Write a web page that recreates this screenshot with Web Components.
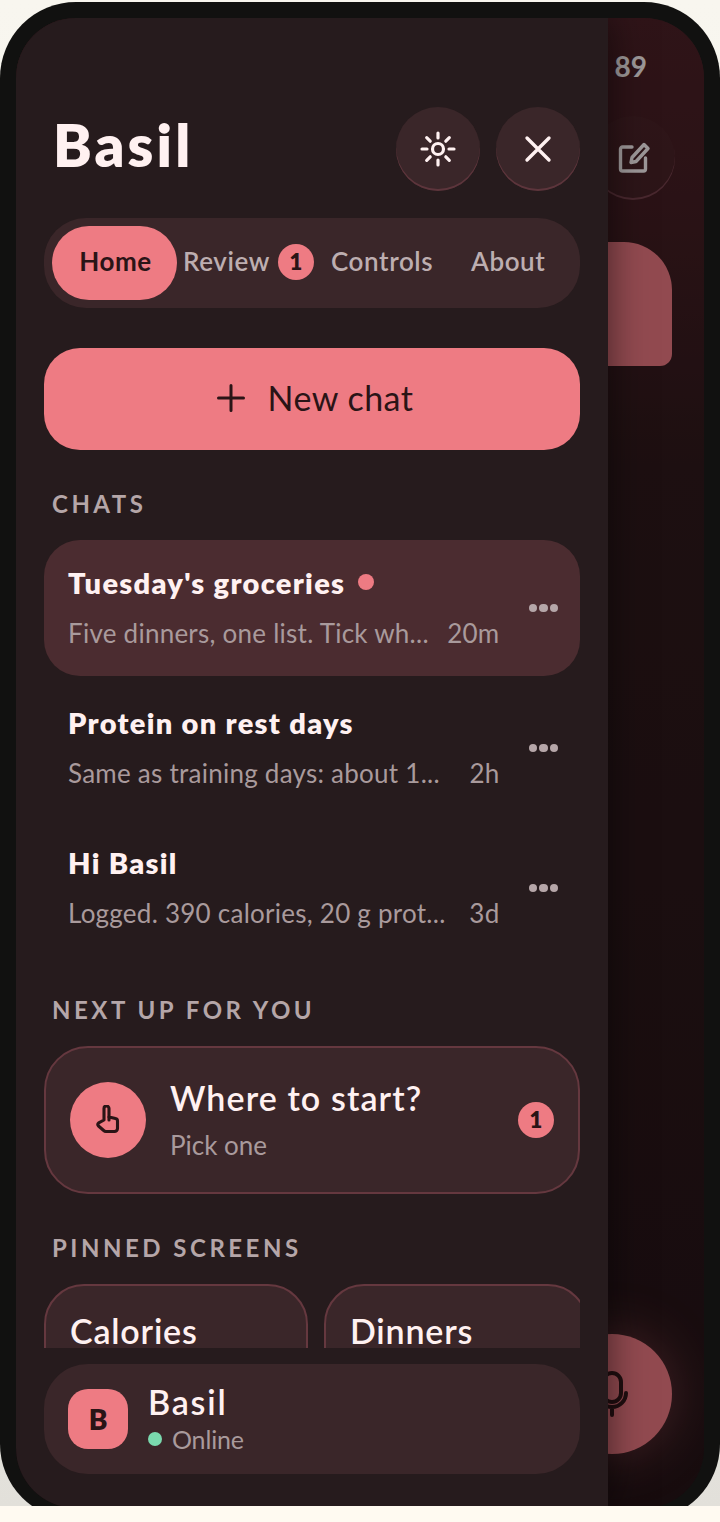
<!DOCTYPE html>
<html>
<head>
  <meta charset="utf-8">
  <style>
    html, body { margin: 0; background: #fffaf1; }
    body { height: 1522px; overflow: hidden; font-family: "Lato", "Noto Sans", sans-serif; }
  </style>
</head>
<body>
  <phone-frame>
    <chat-behind></chat-behind>
    <side-drawer>
      <drawer-header></drawer-header>
      <tab-bar></tab-bar>
      <new-chat></new-chat>
      <section-label>CHATS</section-label>
      <chat-list>
        <chat-row title="Tuesday's groceries" sub="Five dinners, one list. Tick wh..." time="20m" active unread></chat-row>
        <chat-row title="Protein on rest days" sub="Same as training days: about 1..." time="2h"></chat-row>
        <chat-row title="Hi Basil" sub="Logged. 390 calories, 20 g prot..." time="3d"></chat-row>
      </chat-list>
      <section-label>NEXT UP FOR YOU</section-label>
      <next-card></next-card>
      <section-label>PINNED SCREENS</section-label>
      <pinned-row>
        <pinned-card>Calories</pinned-card>
        <pinned-card>Dinners</pinned-card>
      </pinned-row>
      <profile-bar slot="footer"></profile-bar>
    </side-drawer>
  </phone-frame>

  <script>
    const pink = '#ee7b83';
    const panel = '#3a2629';
    const muted = '#a99a9c';
    const ink = '#2a1416';

    function define(name, html, setup) {
      customElements.define(name, class extends HTMLElement {
        constructor() {
          super();
          this.attachShadow({ mode: 'open' });
        }
        connectedCallback() {
          this.shadowRoot.innerHTML = typeof html === 'function' ? html(this) : html;
          if (setup) setup(this);
        }
      });
    }

    // device body, clipped just above the bottom strip of the page
    define('phone-frame', `
      <style>
        :host { display: block; height: 1506px; overflow: hidden;
          background: linear-gradient(#f8f6ef, #f2f0e9 60%, #e2e0da); }
        .body { box-sizing: border-box; height: 1518px; padding: 16px 16px 12px;
          background: #111110; border-radius: 76px; }
        .screen { position: relative; height: 100%; border-radius: 60px; overflow: hidden; }
      </style>
      <div style="height:2px"></div>
      <div class="body"><div class="screen"><slot></slot></div></div>
    `);

    // conversation view under the open drawer
    define('chat-behind', `
      <style>
        :host { display: block; position: absolute; inset: 0; box-sizing: border-box; padding: 34px 29px 0 0;
          background: linear-gradient(#441e23, #3c1b1f 12%, #251617 30%, #1b1012 100%); color: #fff; }
        .top { display: flex; flex-direction: column; align-items: flex-end; }
        .num { font-size: 28px; font-weight: 700; line-height: 28px; margin-right: 28px; color: #fff; }
        .edit { width: 84px; height: 84px; border-radius: 50%; display: grid; place-items: center; margin-top: 36px;
          box-shadow: inset 0 -2px 0 #70404a; background: rgba(255,255,255,.02); }
        .bubble { margin: 42px 3px 0 auto; width: 300px; height: 124px; background: ${pink};
          border-radius: 48px 48px 12px 48px; }
        .mic { position: absolute; right: 32px; bottom: 54px; width: 120px; height: 120px; border-radius: 50%;
          background: ${pink}; box-shadow: 0 0 50px rgba(238,123,131,.35); display: grid; place-items: center; }
        .scrim { position: absolute; inset: 0; background: rgba(18,8,9,.42); }
      </style>
      <div class="top">
        <div class="num">89</div>
        <div class="edit">
          <svg width="34" height="34" viewBox="0 0 34 34" fill="none" stroke="#fff" stroke-width="3.4" stroke-linecap="round" stroke-linejoin="round" style="margin:0 0 0 2px">
            <path d="M15 6H5.500a2 2 0 0 0-2 2v20a2 2 0 0 0 2 2h21a2 2 0 0 0 2-2V17"/>
            <path d="M14 21.500l1-5L27 3.500l4 4L19 20.500z"/>
          </svg>
        </div>
      </div>
      <div class="bubble"></div>
      <div class="mic">
        <svg width="32" height="46" viewBox="0 0 32 46" fill="none" stroke="${ink}" stroke-width="4" stroke-linecap="round">
          <rect x="7" y="2" width="18" height="29" rx="9"/>
          <path d="M2 22a14 14 0 0 0 28 0M16 36v8"/>
        </svg>
      </div>
      <div class="scrim"></div>
    `);

    define('side-drawer', `
      <style>
        :host { display: flex; flex-direction: column; position: absolute; left: 0; top: 0; bottom: 0; width: 592px;
          background: #261b1d; box-shadow: 0 0 36px rgba(0,0,0,.55); }
        .scroll { height: 1330px; margin: 0 28px; overflow: hidden; flex: none; }
        .foot { padding: 16px 28px 0; flex: 1; }
      </style>
      <div class="scroll"><slot></slot></div>
      <div class="foot"><slot name="footer"></slot></div>
    `);

    define('drawer-header', `
      <style>
        :host { display: flex; align-items: center; gap: 16px; padding-top: 89px; height: 84px; }
        h1 { flex: 1; margin: 0 0 9px 9px; font-size: 58px; font-weight: 800; letter-spacing: 3.1px; line-height: 84px; color: #fff1f1; }
        button { width: 84px; height: 84px; border: 0; padding: 0; border-radius: 50%; background: ${panel};
          box-shadow: inset 0 -2px 0 #5d353c; display: grid; place-items: center; }
      </style>
      <h1>Basil</h1>
      <button aria-label="Theme">
        <svg width="36" height="36" viewBox="0 0 36 36" fill="none" stroke="#fff1f1" stroke-width="3.2" stroke-linecap="round">
          <circle cx="18" cy="18" r="5.500"/>
          <path d="M18 2v5M18 29v5M2 18h5M29 18h5M6.700 6.700l3.500 3.500M25.800 25.800l3.500 3.500M6.700 29.300l3.500-3.500M25.800 10.200l3.500-3.500"/>
        </svg>
      </button>
      <button aria-label="Close">
        <svg width="28" height="28" viewBox="0 0 28 28" fill="none" stroke="#fff1f1" stroke-width="3.400" stroke-linecap="round">
          <path d="M3 3l22 22M25 3L3 25"/>
        </svg>
      </button>
    `);

    define('count-badge', `
      <style>
        :host { display: grid; place-items: center; width: 36px; height: 36px; border-radius: 50%; background: ${pink};
          color: ${ink}; font-size: 22px; font-weight: 800; line-height: 1; flex: none; letter-spacing: 0; }
      </style>
      <slot></slot>
    `);

    define('tab-bar', `
      <style>
        :host { display: flex; align-items: center; height: 90px; margin-top: 27px; box-sizing: border-box; padding: 8px;
          background: ${panel}; border-radius: 42px; font-size: 26px; font-weight: 600; letter-spacing: .6px; color: #bdaeb0; }
        span { margin-bottom: 4px; }
        .home { box-sizing: border-box; width: 125px; height: 74px; margin: 0; padding: 0 0 4px 2px; border-radius: 37px;
          background: ${pink}; color: ${ink}; font-weight: 700; display: grid; place-items: center; }
        .review { margin-left: 6px; width: 87px; }
        count-badge { margin: 0 0 2px 8px; }
        .controls { margin-left: 17px; width: 102px; }
        .about { margin-left: 38px; }
      </style>
      <span class="home">Home</span>
      <span class="review">Review</span><count-badge>1</count-badge>
      <span class="controls">Controls</span>
      <span class="about">About</span>
    `);

    define('new-chat', `
      <style>
        :host { display: flex; align-items: center; justify-content: center; gap: 22px; height: 102px; margin-top: 40px;
          padding-left: 7px; background: ${pink}; border-radius: 36px; color: ${ink}; font-size: 34px; font-weight: 400; letter-spacing: .5px; }
        span { margin-bottom: 4px; }
        svg { margin-bottom: 2px; }
      </style>
      <svg width="28" height="28" viewBox="0 0 28 28" fill="none" stroke="${ink}" stroke-width="3" stroke-linecap="round">
        <path d="M14 1.500v25M1.500 14h25"/>
      </svg>
      <span>New chat</span>
    `);

    define('section-label', `
      <style>
        :host { display: block; margin-top: 39px; padding-left: 8px; height: 30px; line-height: 30px;
          font-size: 24px; font-weight: 700; letter-spacing: 3.5px; color: #b5a6a8; }
      </style>
      <slot></slot>
    `);

    define('chat-list', `
      <style>:host { display: flex; flex-direction: column; gap: 4px; margin-top: 21px; }</style>
      <slot></slot>
    `);

    define('chat-row', host => `
      <style>
        :host { display: flex; align-items: center; height: 136px; box-sizing: border-box; padding: 0 22px 0 24px;
          border-radius: 36px; ${host.hasAttribute('active') ? 'background: #4b2c30;' : ''} }
        .main { width: 433px; }
        .title { display: flex; align-items: center; gap: 13px; height: 34px; font-size: 29px; font-weight: 800;
          letter-spacing: 1.3px; color: #fff1f1; }
        .dot { width: 16px; height: 16px; border-radius: 50%; background: ${pink}; }
        .sub { display: flex; justify-content: space-between; margin-top: 16px; height: 36px; line-height: 36px;
          font-size: 26px; letter-spacing: .25px; color: ${muted}; white-space: nowrap; }
        .more { display: flex; gap: 2px; margin-left: 29px; }
        .more i { width: 8.500px; height: 8.500px; border-radius: 50%; background: #b5a6a8; }
      </style>
      <div class="main">
        <div class="title">${host.getAttribute('title')}${host.hasAttribute('unread') ? '<span class="dot"></span>' : ''}</div>
        <div class="sub"><span>${host.getAttribute('sub')}</span><span>${host.getAttribute('time')}</span></div>
      </div>
      <div class="more"><i></i><i></i><i></i></div>
    `);

    define('next-card', `
      <style>
        :host { display: flex; align-items: center; height: 148px; margin-top: 21px; box-sizing: border-box;
          padding: 0 24px; background: ${panel}; border: 2px solid #65383f; border-radius: 44px; }
        .icon { width: 76px; height: 76px; border-radius: 50%; background: ${pink}; display: grid; place-items: center; flex: none; }
        .text { flex: 1; margin: 0 0 2px 24px; }
        .title { font-size: 34px; font-weight: 600; letter-spacing: 1.1px; line-height: 44px; color: #fff1f1; }
        .sub { font-size: 26px; line-height: 36px; margin-top: 7px; color: ${muted}; }
      </style>
      <div class="icon">
        <svg width="24" height="30" viewBox="0 0 24 30" fill="none" stroke="${ink}" stroke-width="3.100" stroke-linejoin="round" stroke-linecap="round">
          <path d="M8 15V3.500a2.500 2.500 0 0 1 5 0V12l6.500 1.500a2.500 2.500 0 0 1 2 2.500v7.500a3 3 0 0 1-3 3H10a3 3 0 0 1-2.300-1L2.500 21a2.300 2.300 0 0 1 .2-3.200L8 15z"/>
          <path d="M13 12v3"/>
        </svg>
      </div>
      <div class="text">
        <div class="title">Where to start?</div>
        <div class="sub">Pick one</div>
      </div>
      <count-badge>1</count-badge>
    `);

    define('pinned-row', `
      <style>:host { display: flex; gap: 16px; margin-top: 21px; }</style>
      <slot></slot>
    `);

    define('pinned-card', `
      <style>
        :host { display: block; flex: none; width: 264px; height: 140px; box-sizing: border-box; padding: 23px 24px;
          background: ${panel}; border: 2px solid #65383f; border-radius: 40px;
          font-size: 34px; font-weight: 600; letter-spacing: .8px; line-height: 44px; color: #fff1f1; }
      </style>
      <slot></slot>
    `);

    define('profile-bar', `
      <style>
        :host { display: flex; align-items: center; gap: 20px; height: 110px; box-sizing: border-box; padding: 0 24px;
          background: ${panel}; border-radius: 44px; }
        .avatar { width: 60px; height: 60px; border-radius: 20px; background: ${pink}; display: grid; place-items: center;
          color: ${ink}; font-size: 28px; font-weight: 800; }
        .name { font-size: 34px; font-weight: 600; letter-spacing: 1.8px; line-height: 40px; color: #fff1f1; }
        .status { display: flex; align-items: center; gap: 10px; font-size: 25px; letter-spacing: -.15px; line-height: 34px; color: ${muted}; }
        .status i { width: 14px; height: 14px; border-radius: 50%; background: #7ad9ae; }
      </style>
      <div class="avatar">B</div>
      <div>
        <div class="name">Basil</div>
        <div class="status"><i></i>Online</div>
      </div>
    `);
  </script>
</body>
</html>
